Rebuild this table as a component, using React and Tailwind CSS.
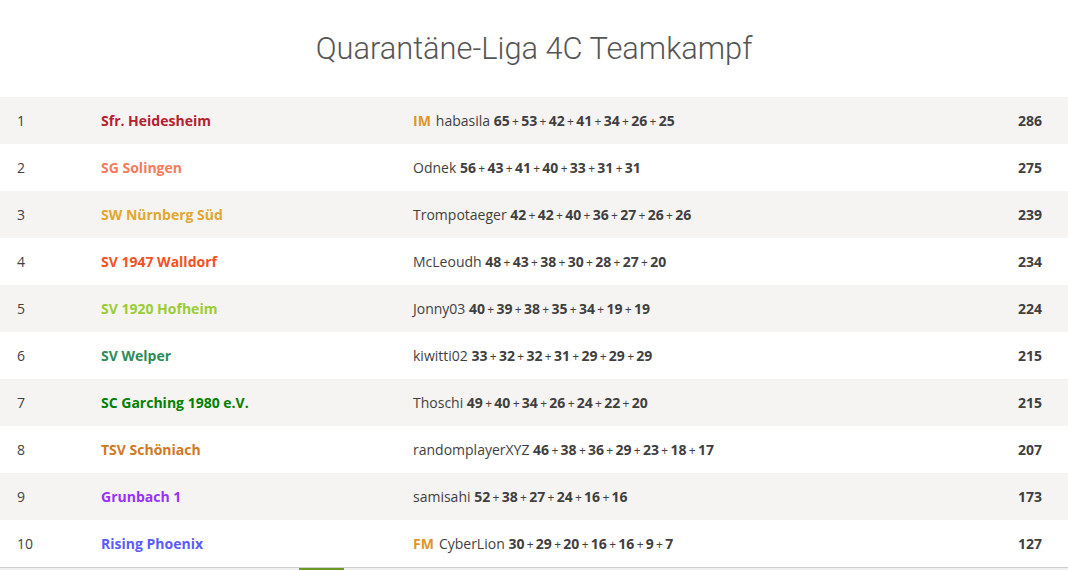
import React from "react";

const teams = [
  { rank: 1, name: "Sfr. Heidesheim", color: "text-[#b5202e]", title: "IM", player: "habasila", scores: [65, 53, 42, 41, 34, 26, 25], total: 286 },
  { rank: 2, name: "SG Solingen", color: "text-[#f27c5c]", player: "Odnek", scores: [56, 43, 41, 40, 33, 31, 31], total: 275 },
  { rank: 3, name: "SW Nürnberg Süd", color: "text-[#e2a72e]", player: "Trompotaeger", scores: [42, 42, 40, 36, 27, 26, 26], total: 239 },
  { rank: 4, name: "SV 1947 Walldorf", color: "text-[#f4511e]", player: "McLeoudh", scores: [48, 43, 38, 30, 28, 27, 20], total: 234 },
  { rank: 5, name: "SV 1920 Hofheim", color: "text-[#9acd32]", player: "Jonny03", scores: [40, 39, 38, 35, 34, 19, 19], total: 224 },
  { rank: 6, name: "SV Welper", color: "text-[#2e8b57]", player: "kiwitti02", scores: [33, 32, 32, 31, 29, 29, 29], total: 215 },
  { rank: 7, name: "SC Garching 1980 e.V.", color: "text-[#008000]", player: "Thoschi", scores: [49, 40, 34, 26, 24, 22, 20], total: 215 },
  { rank: 8, name: "TSV Schöniach", color: "text-[#d2781e]", player: "randomplayerXYZ", scores: [46, 38, 36, 29, 23, 18, 17], total: 207 },
  { rank: 9, name: "Grunbach 1", color: "text-[#9b30ff]", player: "samisahi", scores: [52, 38, 27, 24, 16, 16], total: 173 },
  { rank: 10, name: "Rising Phoenix", color: "text-[#5a5aff]", title: "FM", player: "CyberLion", scores: [30, 29, 20, 16, 16, 9, 7], total: 127 },
];

const App = () => {
  return (
    <div className="w-[1068px] h-[570px] overflow-hidden bg-white text-[#3f3f3f]" style={{ fontFamily: "'Open Sans', sans-serif" }}>
      {/* Title */}
      <div className="h-[97px] flex items-center justify-center">
        <h1 className="text-[30.8px] font-light text-[#555] pt-[2px]" style={{ fontFamily: "Roboto, sans-serif" }}>
          Quarantäne-Liga 4C Teamkampf
        </h1>
      </div>

      {/* Standings */}
      <div>
        {teams.map((t, i) => (
          <div
            key={t.rank}
            className={`h-[47px] grid grid-cols-[101px_312px_1fr_auto] items-center text-[14px] pr-[26px] ${i % 2 === 0 ? "bg-[#f5f4f2]" : "bg-white"}`}
          >
            <div className="pl-[17px]">{t.rank}</div>
            <div className={`font-bold ${t.color}`}>{t.name}</div>
            <div className="whitespace-nowrap">
              {t.title && <span className="font-bold text-[#e0952a] mr-[5px]">{t.title}</span>}
              <span>{t.player}</span>{" "}
              {t.scores.map((s, j) => (
                <React.Fragment key={j}>
                  {j > 0 && <span className="text-[12px] mx-[2.3px]">+</span>}
                  <strong className="font-bold">{s}</strong>
                </React.Fragment>
              ))}
            </div>
            <div className="font-bold text-right">{t.total}</div>
          </div>
        ))}
      </div>

      {/* Bottom bar */}
      <div className="border-t border-[#ccc] bg-[#f0f0f0] h-[10px]">
        <div className="ml-[299px] w-[45px] h-[3px] bg-[#6a9a23]" />
      </div>
    </div>
  );
};

export default App;
